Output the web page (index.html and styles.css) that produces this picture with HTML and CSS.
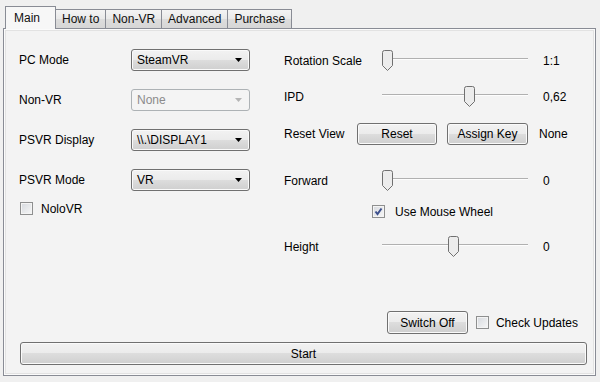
FILE: index.html
```html
<!DOCTYPE html>
<html lang="en">
<head>
    <meta charset="UTF-8">
    <title>PSVR Settings</title>
    <link rel="stylesheet" href="styles.css">
</head>
<body>
    <div class="window">
        <div class="tabs">
            <div class="tab active">Main</div>
            <div class="tab">How to</div>
            <div class="tab">Non-VR</div>
            <div class="tab">Advanced</div>
            <div class="tab">Purchase</div>
        </div>

        <div class="panel">
            <div class="columns">
                <div class="left">
                    <div class="fields">
                        <span class="label">PC Mode</span>
                        <div class="combo"><span>SteamVR</span><svg class="arrow" width="7" height="4"><polygon points="0,0 7,0 3.5,4"/></svg></div>

                        <span class="label">Non-VR</span>
                        <div class="combo disabled"><span>None</span><svg class="arrow" width="7" height="4"><polygon points="0,0 7,0 3.5,4"/></svg></div>

                        <span class="label">PSVR Display</span>
                        <div class="combo"><span>\\.\DISPLAY1</span><svg class="arrow" width="7" height="4"><polygon points="0,0 7,0 3.5,4"/></svg></div>

                        <span class="label">PSVR Mode</span>
                        <div class="combo"><span>VR</span><svg class="arrow" width="7" height="4"><polygon points="0,0 7,0 3.5,4"/></svg></div>
                    </div>
                    <div class="check nolo"><span class="box"></span>NoloVR</div>
                </div>

                <div class="right">
                    <div class="row slider-row rot">
                        <span class="label">Rotation Scale</span>
                        <div class="slider">
                            <div class="track"></div>
                            <svg class="thumb" style="left: 0px" width="11" height="21"><path d="M0.5 2.5 A2 2 0 0 1 2.5 0.5 H8.5 A2 2 0 0 1 10.5 2.5 V15.5 L5.5 20.5 L0.5 15.5 Z"/></svg>
                        </div>
                        <span class="value">1:1</span>
                    </div>

                    <div class="row slider-row ipd">
                        <span class="label">IPD</span>
                        <div class="slider">
                            <div class="track"></div>
                            <svg class="thumb" style="left: 82px" width="11" height="21"><path d="M0.5 2.5 A2 2 0 0 1 2.5 0.5 H8.5 A2 2 0 0 1 10.5 2.5 V15.5 L5.5 20.5 L0.5 15.5 Z"/></svg>
                        </div>
                        <span class="value">0,62</span>
                    </div>

                    <div class="row reset-row">
                        <span class="label short">Reset View</span>
                        <button class="btn reset">Reset</button>
                        <button class="btn assign">Assign Key</button>
                        <span class="key">None</span>
                    </div>

                    <div class="row slider-row forward">
                        <span class="label">Forward</span>
                        <div class="slider">
                            <div class="track"></div>
                            <svg class="thumb" style="left: 0px" width="11" height="21"><path d="M0.5 2.5 A2 2 0 0 1 2.5 0.5 H8.5 A2 2 0 0 1 10.5 2.5 V15.5 L5.5 20.5 L0.5 15.5 Z"/></svg>
                        </div>
                        <span class="value">0</span>
                    </div>

                    <div class="check wheel">
                        <span class="box checked"><svg width="9" height="9"><path d="M1.5 4.5 L3.5 7 L7.5 1.5" /></svg></span>Use Mouse Wheel
                    </div>

                    <div class="row slider-row height">
                        <span class="label">Height</span>
                        <div class="slider">
                            <div class="track"></div>
                            <svg class="thumb" style="left: 66px" width="11" height="21"><path d="M0.5 2.5 A2 2 0 0 1 2.5 0.5 H8.5 A2 2 0 0 1 10.5 2.5 V15.5 L5.5 20.5 L0.5 15.5 Z"/></svg>
                        </div>
                        <span class="value">0</span>
                    </div>
                </div>
            </div>

            <div class="bottom">
                <button class="btn switch">Switch Off</button>
                <div class="check updates"><span class="box"></span>Check Updates</div>
            </div>
            <button class="btn start">Start</button>
        </div>
    </div>
</body>
</html>
```

FILE: styles.css
```css
body {
    margin: 0;
    background-color: #f0f0f0;
    font-family: "Liberation Sans", Arial, sans-serif;
    font-size: 12px;
    color: #000;
}

.window {
    height: 382px;
    box-sizing: border-box;
    padding: 6px 4px 6px 3px;
    display: flex;
    flex-direction: column;
}

/* tab strip */
.tabs {
    display: flex;
    align-items: flex-end;
    height: 23px;
    padding-left: 2px;
}

.tab {
    height: 20px;
    line-height: 18px;
    box-sizing: border-box;
    padding: 0 6px;
    margin-left: -1px;
    border: 1px solid #898c95;
    border-bottom: none;
    background: linear-gradient(#f4f4f4, #e8e8e8 50%, #dcdcdc 50%, #d6d6d6);
    color: #111;
}

.tab.active {
    position: relative;
    z-index: 1;
    height: 23px;
    line-height: 22px;
    margin-left: 0;
    padding: 0 15px 0 8px;
    background: #f7f7f7;
}

/* tab page */
.panel {
    flex: 1;
    margin-top: -1px;
    border: 1px solid #898c95;
    background-color: #f3f3f3;
    box-shadow: inset 0 0 0 1px #fbfbfb, inset 0 0 0 2px #e2e2e2;
    display: flex;
    flex-direction: column;
    padding: 20px 8px 10px 15px;
}

.columns {
    display: grid;
    grid-template-columns: 265px 1fr;
}

.fields {
    display: grid;
    grid-template-columns: 112px 119px;
    grid-auto-rows: 22px;
    row-gap: 18px;
    align-items: center;
}

.combo {
    height: 22px;
    box-sizing: border-box;
    border: 1px solid #707070;
    border-radius: 3px;
    background: linear-gradient(#f2f2f2, #ebebeb 50%, #dddddd 50%, #cfcfcf);
    box-shadow: inset 0 0 0 1px #fafafa;
    display: flex;
    align-items: center;
    justify-content: space-between;
    padding: 0 7px 0 5px;
}

.combo .arrow {
    fill: #000;
}

.combo.disabled {
    border-color: #adb2b5;
    background: #f4f4f4;
    box-shadow: none;
    color: #8b8b8b;
}

.combo.disabled .arrow {
    fill: #b5b5b5;
}

/* checkboxes */
.check {
    display: flex;
    align-items: center;
    height: 13px;
}

.box {
    width: 13px;
    height: 13px;
    box-sizing: border-box;
    border: 1px solid #8e8f8f;
    background: linear-gradient(135deg, #d6d9de, #f7f7f7);
    box-shadow: inset 0 0 0 1px #f4f4f4;
    display: flex;
    align-items: center;
    justify-content: center;
    margin-right: 8px;
}

.box svg path {
    fill: none;
    stroke: #3c4f8c;
    stroke-width: 2;
}

.nolo {
    margin-top: 11px;
    margin-left: 1px;
}

/* right column */
.row {
    display: flex;
    align-items: center;
}

.right .label {
    width: 98px;
}

.slider-row {
    height: 21px;
}

.rot {
    margin-top: 1px;
}

.ipd {
    margin-top: 15px;
}

.forward {
    margin-top: 25px;
}

.height {
    margin-top: 18px;
}

.slider {
    position: relative;
    width: 146px;
    height: 21px;
}

.track {
    margin-top: 8px;
    height: 1px;
    background-color: #b0b0b0;
    border-bottom: 1px solid #fdfdfd;
}

.thumb {
    position: absolute;
    top: 0;
}

.thumb path {
    fill: #ececec;
    stroke: #707070;
}

.value {
    margin-left: 15px;
}

.reset-row {
    margin-top: 16px;
    height: 22px;
}

.right .label.short {
    width: 73px;
}

.btn {
    height: 22px;
    box-sizing: border-box;
    border: 1px solid #707070;
    border-radius: 3px;
    background: linear-gradient(#f2f2f2, #ebebeb 50%, #dddddd 50%, #cfcfcf);
    box-shadow: inset 0 0 0 1px #fafafa;
    font-family: inherit;
    font-size: 12px;
    color: #000;
    padding: 0;
}

.reset {
    width: 80px;
    margin-right: 10px;
}

.assign {
    width: 81px;
}

.key {
    margin-left: 11px;
}

.wheel {
    margin-top: 14px;
    padding-left: 88px;
}

.wheel .box {
    margin-right: 10px;
}

/* bottom */
.bottom {
    margin-top: auto;
    margin-bottom: 8px;
    display: flex;
    justify-content: flex-end;
    align-items: center;
    padding-right: 9px;
}

.switch {
    width: 81px;
    height: 23px;
    margin-right: 8px;
}

.updates .box {
    margin-right: 7px;
}

.start {
    height: 23px;
    margin-left: 1px;
}
```
